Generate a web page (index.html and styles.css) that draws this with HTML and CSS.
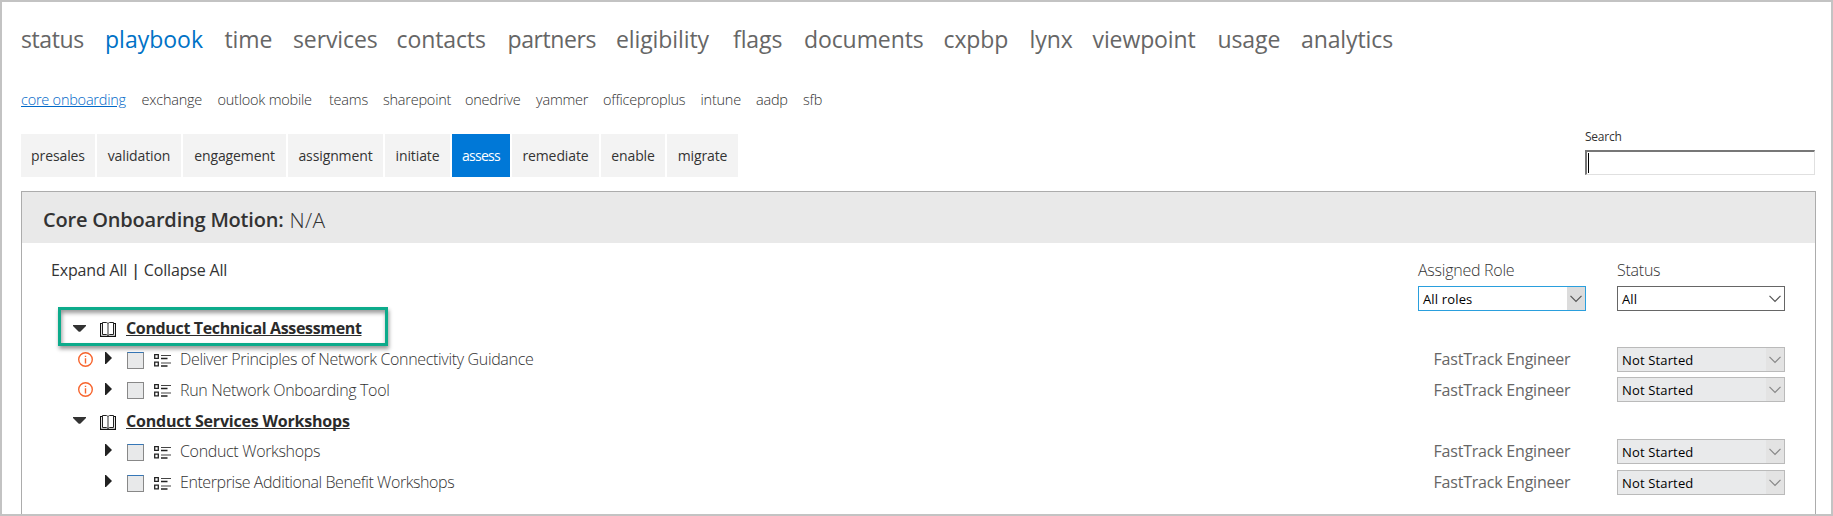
FILE: index.html
```html
<!DOCTYPE html>
<html lang="en">
<head>
<meta charset="utf-8">
<title>Playbook</title>
<link rel="stylesheet" href="styles.css">
</head>
<body>
<svg width="0" height="0" class="defs" aria-hidden="true">
  <symbol id="down" viewBox="0 0 13 7"><path d="M0 0H13V1L7.5 6.5Q6.5 7.2 5.500 6.500L0 1Z" fill="#333"/></symbol>
  <symbol id="right" viewBox="0 0 7 12"><path d="M0 0H1L7 6L1 12H0Z" fill="#222"/></symbol>
  <symbol id="book" viewBox="0 0 16 15"><path d="M2.500 .5H6.500L8 1.500L9.500 .5H13.500V12.500H9.500L8 13.500L6.500 12.500H2.500Z" fill="#fff" stroke="#222"/><path d="M8 1.500V13" stroke="#777" stroke-width="1.500"/><path d="M2 1.500H.5V14.400H15.500V1.500H14" fill="none" stroke="#111" stroke-width="1.200"/></symbol>
  <symbol id="info" viewBox="0 0 15 15"><circle cx="7.500" cy="7.500" r="6.800" fill="none" stroke="#f7642d" stroke-width="1.400"/><path d="M7.500 6.300V11.500M7.500 3.700V5.100" stroke="#f7642d" stroke-width="1.400"/></symbol>
  <symbol id="list" viewBox="0 0 17 13"><path d="M.7.700H4.300V4.300H.7ZM.7 8.200H4.300V11.800H.7Z" fill="#fff" stroke="#222" stroke-width="1.300"/><path d="M7 1.500H17M7 9H17" stroke="#444" stroke-width="1.200"/><path d="M7 4.500H13.500M7 12H13.500" stroke="#222" stroke-width="1.300"/></symbol>
  <symbol id="chev" viewBox="0 0 12 8"><path d="M.5.800L6 6.400L11.500.800" fill="none" stroke="currentColor" stroke-width="1.200"/></symbol>
</svg>
<div class="page">
  <nav class="nav">
    <a class="tight">status</a><a class="current">playbook</a><a>time</a><a>services</a><a>contacts</a><a class="tight">partners</a><a>eligibility</a><a>flags</a><a>documents</a><a>cxpbp</a><a>lynx</a><a>viewpoint</a><a>usage</a><a>analytics</a>
  </nav>
  <nav class="subnav">
    <a class="current">core onboarding</a><a>exchange</a><a>outlook mobile</a><a>teams</a><a>sharepoint</a><a>onedrive</a><a>yammer</a><a>officeproplus</a><a>intune</a><a>aadp</a><a>sfb</a>
  </nav>
  <div class="toolbar">
    <div class="tabs">
      <a>presales</a><a>validation</a><a>engagement</a><a>assignment</a><a>initiate</a><a class="active">assess</a><a>remediate</a><a>enable</a><a>migrate</a>
    </div>
    <div class="search"><label>Search</label><div class="field"><span class="caret"></span></div></div>
  </div>
  <section class="panel">
    <header class="panel-head"><h1>Core Onboarding Motion:</h1><span>N/A</span></header>
    <div class="filters">
      <div class="toggle"><a>Expand All</a> <b>|</b> <a>Collapse All</a></div>
      <div class="filter"><label>Assigned Role</label><div class="select focus"><span>All roles</span><i><svg><use href="#chev"/></svg></i></div></div>
      <div class="filter"><label>Status</label><div class="select"><span>All</span><i><svg><use href="#chev"/></svg></i></div></div>
    </div>
    <div class="tree">
      <div class="row group highlight"><svg class="down"><use href="#down"/></svg><svg class="book"><use href="#book"/></svg><a>Conduct Technical Assessment</a></div>
      <div class="row task"><svg class="info"><use href="#info"/></svg><svg class="right"><use href="#right"/></svg><span class="check blue"></span><svg class="list"><use href="#list"/></svg><span class="name">Deliver Principles of Network Connectivity Guidance</span><span class="role">FastTrack Engineer</span><div class="select disabled"><span>Not Started</span><i><svg><use href="#chev"/></svg></i></div></div>
      <div class="row task"><svg class="info"><use href="#info"/></svg><svg class="right"><use href="#right"/></svg><span class="check"></span><svg class="list"><use href="#list"/></svg><span class="name">Run Network Onboarding Tool</span><span class="role">FastTrack Engineer</span><div class="select disabled"><span>Not Started</span><i><svg><use href="#chev"/></svg></i></div></div>
      <div class="row group"><svg class="down"><use href="#down"/></svg><svg class="book"><use href="#book"/></svg><a class="services">Conduct Services Workshops</a></div>
      <div class="row task"><svg class="info"></svg><svg class="right"><use href="#right"/></svg><span class="check blue"></span><svg class="list"><use href="#list"/></svg><span class="name">Conduct Workshops</span><span class="role">FastTrack Engineer</span><div class="select disabled"><span>Not Started</span><i><svg><use href="#chev"/></svg></i></div></div>
      <div class="row task"><svg class="info"></svg><svg class="right"><use href="#right"/></svg><span class="check blue"></span><svg class="list"><use href="#list"/></svg><span class="name benefit">Enterprise Additional Benefit Workshops</span><span class="role">FastTrack Engineer</span><div class="select disabled"><span>Not Started</span><i><svg><use href="#chev"/></svg></i></div></div>
    </div>
  </section>
</div>
</body>
</html>
```
FILE: styles.css
```css
*, *::before { box-sizing: border-box; }
body { margin: 0; font-family: "Open Sans", sans-serif; color: #333; background: #fff; }
.defs { position: absolute; }
.page { height: 516px; border: 2px solid #c3c3c3; padding: 0 15px 0 19px; overflow: hidden; display: flex; flex-direction: column; }
.nav, .subnav, .tabs { display: grid; white-space: nowrap; }
.nav {
  grid-template-columns: 84px 119.500px 68.500px 103.500px 111px 108.500px 117px 71px 139.500px 86px 63px 125px 83.500px 95px;
  height: 74px; padding-top: 21px; line-height: 32px;
  font-size: 23px; letter-spacing: -0.1px; color: #666;
}
.nav .tight { letter-spacing: -0.4px; }
.nav .current { color: #0072c6; letter-spacing: 0; }
.subnav {
  grid-template-columns: 120.500px 76px 111.500px 54px 82px 71px 67px 97.500px 55.500px 47px 30px;
  height: 58px; padding-top: 14px; line-height: 20px;
  font-size: 14.5px; font-weight: 300; letter-spacing: -0.230px; color: #333;
}
.subnav .current { color: #0068c8; text-decoration: underline; justify-self: start; }
.toolbar { display: flex; justify-content: space-between; height: 57px; }
.tabs {
  grid-template-columns: 74px 84px 103px 95px 65px 58px 87px 64px 71px;
  column-gap: 2px; height: 42px; line-height: 43px; text-align: center;
  font-size: 14px; letter-spacing: -0.1px; color: #333;
}
.tabs a { background: #f3f3f3; }
.tabs .active { background: #0078d7; color: #fff; letter-spacing: -0.700px; }
.search { width: 231px; margin-top: -6px; }
.search label { display: block; height: 22px; line-height: 18px; font-size: 12px; letter-spacing: -0.250px; }
.field { width: 230px; height: 25px; border: 1px solid #e0e0e0; border-top: 2px solid #777; border-left: 2px solid #777; padding: 1px; }
.caret { display: block; width: 1px; height: 20px; background: #000; }
.panel { flex: 1; border: 1px solid #acacac; border-bottom: 0; }
.panel-head { height: 51px; background: #e9e9e9; padding-left: 21px; display: flex; align-items: center; gap: 6px; font-size: 20px; line-height: 28px; padding-top: 4px; }
.panel-head h1 { margin: 0; font-size: 20px; font-weight: 600; letter-spacing: -0.200px; }
.panel-head span { font-weight: 300; color: #333; font-size: 21px; letter-spacing: 0.4px; }
.filters { height: 70px; padding: 16px 30px 0 29px; display: flex; gap: 31px; font-size: 16px; line-height: 22px; }
.toggle { flex: 1; letter-spacing: -0.170px; }
.toggle b { font-weight: 600; }
.filter { width: 168px; font-weight: 300; letter-spacing: -0.250px; }
.filter label { display: block; height: 27px; }
.select { width: 168px; height: 25px; border: 1px solid #666; padding-left: 4px; display: flex; justify-content: space-between; font-size: 13px; font-weight: 400; line-height: 25px; letter-spacing: 0.150px; color: #000; background: #fff; }
.select i { width: 18px; display: flex; justify-content: center; padding-top: 8px; color: #555; }
.select svg { width: 12px; height: 8px; }
.select.focus { border-color: #2a9fdd; }
.select.focus i { background: #dcdcdc; }
.select.disabled { border-color: #bababa; background: #e9eaeb; }
.select.disabled i { background: #e3e3e3; color: #888; }
.row { display: flex; align-items: center; height: 30.750px; }
.group { padding-left: 51px; font-size: 16px; font-weight: 700; position: relative; }
.group a { letter-spacing: -0.350px; line-height: 19px; margin-top: 1px; color: #2b2b2b; text-decoration: underline; text-decoration-thickness: 1px; text-underline-offset: 1px; text-decoration-skip-ink: none; }
.group .services { letter-spacing: -0.200px; }
.down { width: 13px; height: 7px; margin-right: 14px; }
.book { width: 16px; height: 15px; margin: 3px 10px 0 0; }
.highlight::before { content: ""; position: absolute; left: 36px; top: -6px; width: 330px; height: 39px; border: 3px solid #0cab8b; box-shadow: 1px 3px 4px rgba(0,0,0,.4), inset 1px 3px 4px rgba(0,0,0,.4); }
.task { padding: 0 30px 0 56px; font-size: 16px; }
.info { width: 15px; height: 15px; margin-right: 12px; }
.right { width: 7px; height: 12px; margin: -2px 15px 0 0; }
.check { width: 17px; height: 17px; margin: 2px 10px 0 0; border: 1px solid #888; background: #e8e9ea; }
.check.blue { border-top-color: #3577b8; }
.list { width: 17px; height: 13px; margin: 2px 9px 0 0; }
.name { flex: 1; font-weight: 300; letter-spacing: -0.330px; }
.name.benefit { letter-spacing: -0.420px; }
.role { width: 183.500px; color: #666; letter-spacing: -0.210px; }
```
